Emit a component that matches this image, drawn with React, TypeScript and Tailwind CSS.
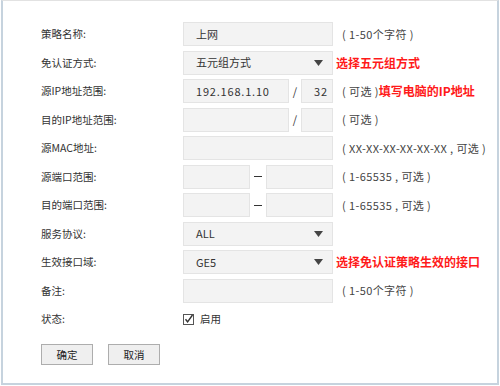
import React from "react";

const font = { fontFamily: '"Noto Sans CJK SC", "Noto Sans", sans-serif' };

function Box({ w, value, wide }: { w: string; value?: string; wide?: boolean }) {
  return (
    <div
      className={`${w} h-[24px] flex items-center pl-[12px] bg-[#f3f3f3] border border-[#e4e4e4] text-[11px] text-[#333] ${wide ? "tracking-[0.8px]" : ""}`}
    >
      {value}
    </div>
  );
}

function Select({ value }: { value: string }) {
  return (
    <div className="w-[150px] h-[24px] flex items-center justify-between pl-[12px] pr-[9px] bg-[#f3f3f3] border border-[#e4e4e4] text-[11px] text-[#333]">
      <span>{value}</span>
      <svg width="9" height="6" viewBox="0 0 9 6">
        <path d="M0 0H9L4.5 6Z" fill="#444" />
      </svg>
    </div>
  );
}

function Hint({ children }: { children: React.ReactNode }) {
  return (
    <span className="ml-[6px] whitespace-pre text-[11px] tracking-[0.4px] text-[#444]">
      {children}
    </span>
  );
}

function Red({ children }: { children: React.ReactNode }) {
  return <span className="text-[12px] font-bold text-[#ff1a1a]">{children}</span>;
}

function Row({ label, children }: { label: string; children: React.ReactNode }) {
  return (
    <div className="flex items-center h-[24px]">
      <div className="w-[142px] text-[10.5px] text-[#333]">{label}</div>
      <div className="flex items-center gap-[3px]">{children}</div>
    </div>
  );
}

function Dash() {
  return (
    <div className="w-[16px] flex justify-center">
      <div className="w-[8px] h-px bg-[#333]" />
    </div>
  );
}

function Slash() {
  return <div className="w-[12px] text-center text-[11px] text-[#333]">/</div>;
}

export default function App() {
  return (
    <div className="w-[500px] h-[386px] bg-white" style={font}>
      <div className="ml-[1px] w-[498px] h-[385px] border-t border-t-[#e2e2e2] border-l-2 border-r-2 border-b-2 border-[#c6d3de] pt-[21px] pl-[38px]">
        <div className="flex flex-col gap-[4.5px]">
          <Row label="策略名称:">
            <Box w="w-[150px]" value="上网" />
            <Hint>( 1-50个字符 )</Hint>
          </Row>
          <Row label="免认证方式:">
            <Select value="五元组方式" />
            <Red>选择五元组方式</Red>
          </Row>
          <Row label="源IP地址范围:">
            <div className="flex items-center">
              <Box w="w-[106px]" value="192.168.1.10" wide />
              <Slash />
              <Box w="w-[32px]" value="32" wide />
            </div>
            <span className="flex items-center">
              <Hint>( 可选 )</Hint>
              <Red>填写电脑的IP地址</Red>
            </span>
          </Row>
          <Row label="目的IP地址范围:">
            <div className="flex items-center">
              <Box w="w-[106px]" />
              <Slash />
              <Box w="w-[32px]" />
            </div>
            <Hint>( 可选 )</Hint>
          </Row>
          <Row label="源MAC地址:">
            <Box w="w-[150px]" />
            <Hint>( XX-XX-XX-XX-XX-XX , 可选 )</Hint>
          </Row>
          <Row label="源端口范围:">
            <div className="flex items-center">
              <Box w="w-[67px]" />
              <Dash />
              <Box w="w-[67px]" />
            </div>
            <Hint>( 1-65535 , 可选 )</Hint>
          </Row>
          <Row label="目的端口范围:">
            <div className="flex items-center">
              <Box w="w-[67px]" />
              <Dash />
              <Box w="w-[67px]" />
            </div>
            <Hint>( 1-65535 , 可选 )</Hint>
          </Row>
          <Row label="服务协议:">
            <Select value="ALL" />
          </Row>
          <Row label="生效接口域:">
            <Select value="GE5" />
            <Red>选择免认证策略生效的接口</Red>
          </Row>
          <Row label="备注:">
            <Box w="w-[150px]" />
            <Hint>( 1-50个字符 )</Hint>
          </Row>
          <Row label="状态:">
            <div className="flex items-center gap-[6px]">
              <svg width="11" height="11" viewBox="0 0 11 11">
                <rect x="0.5" y="0.5" width="10" height="10" fill="#fff" stroke="#555" />
                <path d="M2.5 5.2L4.6 7.8L9.5 1" fill="none" stroke="#333" strokeWidth="1.4" />
              </svg>
              <span className="text-[10.5px] text-[#333]">启用</span>
            </div>
          </Row>
        </div>
        <div className="flex gap-[15px] mt-[13px]">
          <button className="w-[52px] h-[21px] bg-[#efefef] border border-[#adadad] text-[10.5px] text-[#222]">
            确定
          </button>
          <button className="w-[52px] h-[21px] bg-[#efefef] border border-[#adadad] text-[10.5px] text-[#222]">
            取消
          </button>
        </div>
      </div>
    </div>
  );
}
